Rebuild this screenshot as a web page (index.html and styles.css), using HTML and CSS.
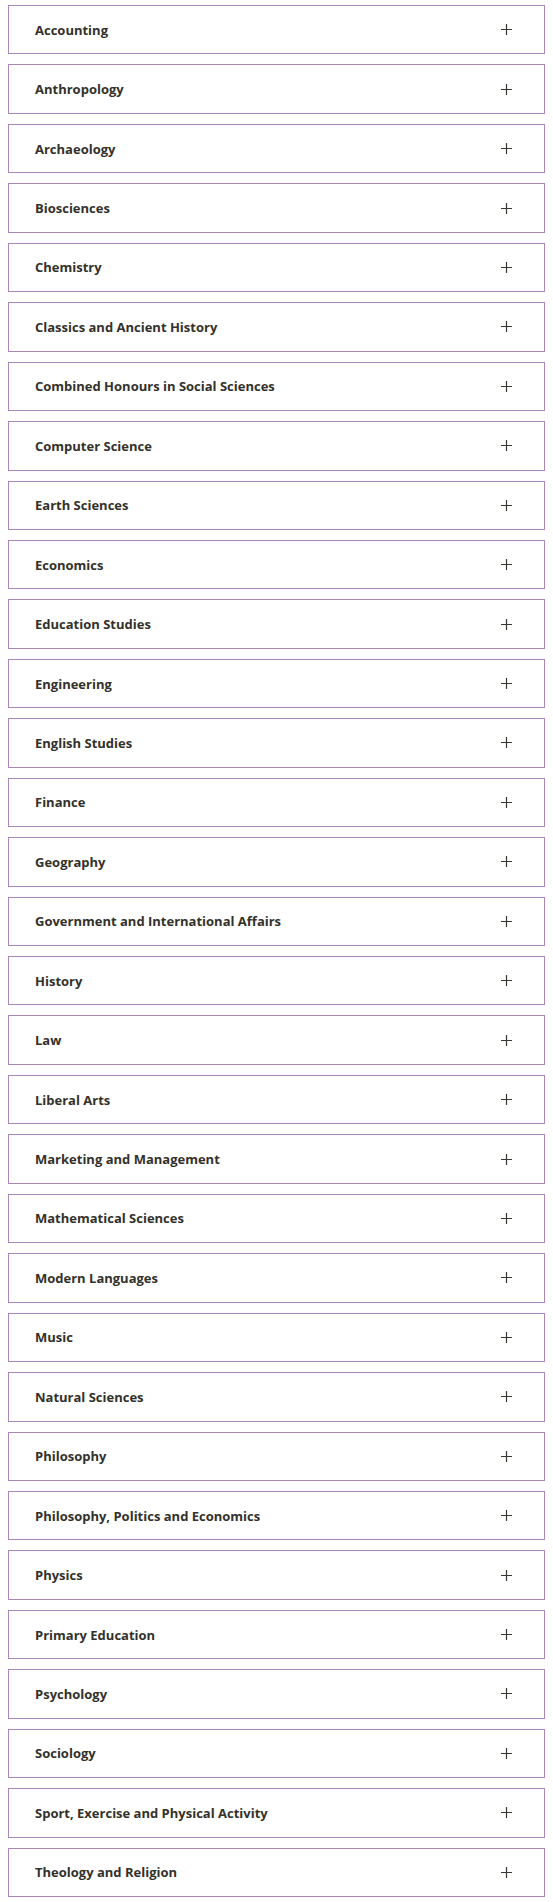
FILE: index.html
```html
<!DOCTYPE html>
<html lang="en">
<head>
    <meta charset="UTF-8">
    <meta name="viewport" content="width=device-width, initial-scale=1.0">
    <title>Subjects</title>
    <link rel="stylesheet" href="styles.css">
</head>
<body>
    <div class="accordion">
        <div class="acc-item"><span class="acc-title">Accounting</span><svg class="plus" viewBox="0 0 11 11"><path d="M5.5 0V11M0 5.5H11"/></svg></div>
        <div class="acc-item"><span class="acc-title">Anthropology</span><svg class="plus" viewBox="0 0 11 11"><path d="M5.5 0V11M0 5.5H11"/></svg></div>
        <div class="acc-item"><span class="acc-title">Archaeology</span><svg class="plus" viewBox="0 0 11 11"><path d="M5.5 0V11M0 5.5H11"/></svg></div>
        <div class="acc-item"><span class="acc-title">Biosciences</span><svg class="plus" viewBox="0 0 11 11"><path d="M5.5 0V11M0 5.5H11"/></svg></div>
        <div class="acc-item"><span class="acc-title">Chemistry</span><svg class="plus" viewBox="0 0 11 11"><path d="M5.5 0V11M0 5.5H11"/></svg></div>
        <div class="acc-item"><span class="acc-title">Classics and Ancient History</span><svg class="plus" viewBox="0 0 11 11"><path d="M5.5 0V11M0 5.5H11"/></svg></div>
        <div class="acc-item"><span class="acc-title">Combined Honours in Social Sciences</span><svg class="plus" viewBox="0 0 11 11"><path d="M5.5 0V11M0 5.5H11"/></svg></div>
        <div class="acc-item"><span class="acc-title">Computer Science</span><svg class="plus" viewBox="0 0 11 11"><path d="M5.5 0V11M0 5.5H11"/></svg></div>
        <div class="acc-item"><span class="acc-title">Earth Sciences</span><svg class="plus" viewBox="0 0 11 11"><path d="M5.5 0V11M0 5.5H11"/></svg></div>
        <div class="acc-item"><span class="acc-title">Economics</span><svg class="plus" viewBox="0 0 11 11"><path d="M5.5 0V11M0 5.5H11"/></svg></div>
        <div class="acc-item"><span class="acc-title">Education Studies</span><svg class="plus" viewBox="0 0 11 11"><path d="M5.5 0V11M0 5.5H11"/></svg></div>
        <div class="acc-item"><span class="acc-title">Engineering</span><svg class="plus" viewBox="0 0 11 11"><path d="M5.5 0V11M0 5.5H11"/></svg></div>
        <div class="acc-item"><span class="acc-title">English Studies</span><svg class="plus" viewBox="0 0 11 11"><path d="M5.5 0V11M0 5.5H11"/></svg></div>
        <div class="acc-item"><span class="acc-title">Finance</span><svg class="plus" viewBox="0 0 11 11"><path d="M5.5 0V11M0 5.5H11"/></svg></div>
        <div class="acc-item"><span class="acc-title">Geography</span><svg class="plus" viewBox="0 0 11 11"><path d="M5.5 0V11M0 5.5H11"/></svg></div>
        <div class="acc-item"><span class="acc-title">Government and International Affairs</span><svg class="plus" viewBox="0 0 11 11"><path d="M5.5 0V11M0 5.5H11"/></svg></div>
        <div class="acc-item"><span class="acc-title">History</span><svg class="plus" viewBox="0 0 11 11"><path d="M5.5 0V11M0 5.5H11"/></svg></div>
        <div class="acc-item"><span class="acc-title">Law</span><svg class="plus" viewBox="0 0 11 11"><path d="M5.5 0V11M0 5.5H11"/></svg></div>
        <div class="acc-item"><span class="acc-title">Liberal Arts</span><svg class="plus" viewBox="0 0 11 11"><path d="M5.5 0V11M0 5.5H11"/></svg></div>
        <div class="acc-item"><span class="acc-title">Marketing and Management</span><svg class="plus" viewBox="0 0 11 11"><path d="M5.5 0V11M0 5.5H11"/></svg></div>
        <div class="acc-item"><span class="acc-title">Mathematical Sciences</span><svg class="plus" viewBox="0 0 11 11"><path d="M5.5 0V11M0 5.5H11"/></svg></div>
        <div class="acc-item"><span class="acc-title">Modern Languages</span><svg class="plus" viewBox="0 0 11 11"><path d="M5.5 0V11M0 5.5H11"/></svg></div>
        <div class="acc-item"><span class="acc-title">Music</span><svg class="plus" viewBox="0 0 11 11"><path d="M5.5 0V11M0 5.5H11"/></svg></div>
        <div class="acc-item"><span class="acc-title">Natural Sciences</span><svg class="plus" viewBox="0 0 11 11"><path d="M5.5 0V11M0 5.5H11"/></svg></div>
        <div class="acc-item"><span class="acc-title">Philosophy</span><svg class="plus" viewBox="0 0 11 11"><path d="M5.5 0V11M0 5.5H11"/></svg></div>
        <div class="acc-item"><span class="acc-title">Philosophy, Politics and Economics</span><svg class="plus" viewBox="0 0 11 11"><path d="M5.5 0V11M0 5.5H11"/></svg></div>
        <div class="acc-item"><span class="acc-title">Physics</span><svg class="plus" viewBox="0 0 11 11"><path d="M5.5 0V11M0 5.5H11"/></svg></div>
        <div class="acc-item"><span class="acc-title">Primary Education</span><svg class="plus" viewBox="0 0 11 11"><path d="M5.5 0V11M0 5.5H11"/></svg></div>
        <div class="acc-item"><span class="acc-title">Psychology</span><svg class="plus" viewBox="0 0 11 11"><path d="M5.5 0V11M0 5.5H11"/></svg></div>
        <div class="acc-item"><span class="acc-title">Sociology</span><svg class="plus" viewBox="0 0 11 11"><path d="M5.5 0V11M0 5.5H11"/></svg></div>
        <div class="acc-item"><span class="acc-title">Sport, Exercise and Physical Activity</span><svg class="plus" viewBox="0 0 11 11"><path d="M5.5 0V11M0 5.5H11"/></svg></div>
        <div class="acc-item"><span class="acc-title">Theology and Religion</span><svg class="plus" viewBox="0 0 11 11"><path d="M5.5 0V11M0 5.5H11"/></svg></div>
    </div>
</body>
</html>
```

FILE: styles.css
```css
/* Global Styles */
body {
    font-family: 'Open Sans', sans-serif;
    margin: 0;
    padding: 0;
    background: #fff;
    color: #33312b;
}

/* Accordion */
.accordion {
    display: flex;
    flex-direction: column;
    gap: 10px;
    padding: 5px 8px;
}

.acc-item {
    display: flex;
    align-items: center;
    justify-content: space-between;
    box-sizing: border-box;
    height: 49.44px;
    padding: 0 32px 0 26px;
    border: 1px solid #ac86bb;
}

.acc-title {
    font-size: 13px;
    font-weight: 700;
}

.plus {
    width: 11px;
    height: 11px;
    fill: none;
    stroke: #3a3833;
    stroke-width: 1.2;
}
```
